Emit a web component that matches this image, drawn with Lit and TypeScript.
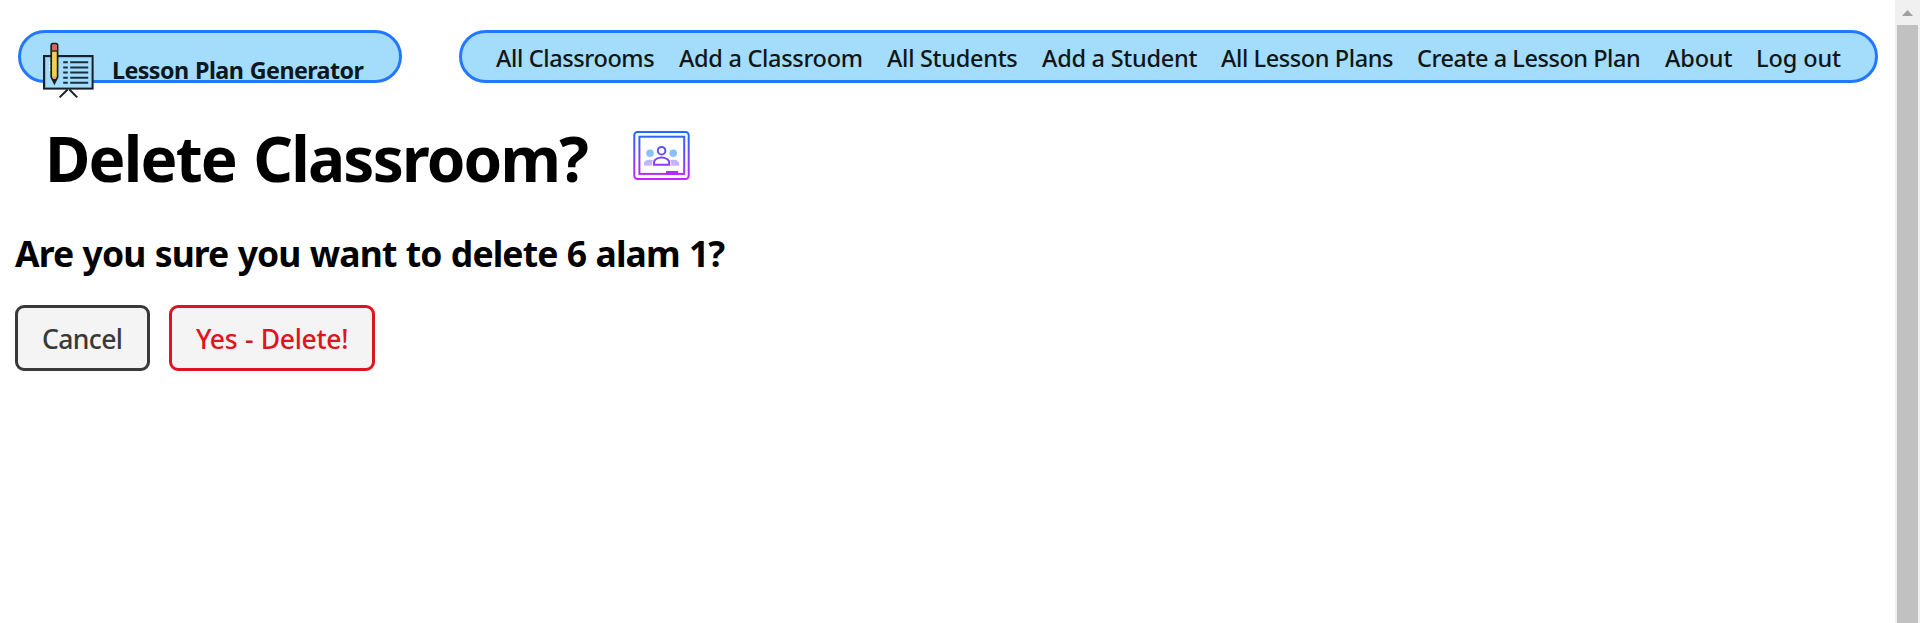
import { LitElement, html, css } from "lit";

class AppRoot extends LitElement {
  static styles = css`
    :host {
      display: flex;
      height: 623px;
      overflow: hidden;
      background: #fff;
      color: #000;
      font-family: "Noto Sans", "Open Sans", sans-serif;
      white-space: nowrap;
    }
    .page { flex: 1; min-width: 0; }
    header {
      display: flex;
      gap: 57px;
      padding: 30px 17px 0 18px;
    }
    .pill {
      box-sizing: border-box;
      height: 53px;
      border: 3px solid #2477ff;
      border-radius: 27px;
      background: #a4dcfb;
    }
    .logo {
      display: flex;
      align-items: flex-start;
      gap: 17px;
      width: 384px;
      padding-left: 22px;
      color: #0b1820;
      font-size: 23.3px;
      font-weight: 700;
      line-height: 74px;
      letter-spacing: -0.6px;
      word-spacing: 1.2px;
    }
    .logo svg { flex: none; margin-top: 9px; }
    nav {
      flex: 1;
      display: grid;
      grid-template-columns: 183px 208px 155px 179px 196px 248px 91px auto;
      padding-left: 34px;
      color: #101616;
      font-size: 23.5px;
      font-weight: 500;
      line-height: 50px;
      letter-spacing: -0.38px;
    }
    nav a:nth-child(2), nav a:nth-child(3) { letter-spacing: -0.3px; }
    nav a:nth-child(4) { letter-spacing: -0.26px; }
    nav a:nth-child(5) { letter-spacing: -0.41px; }
    nav a:nth-child(6) { letter-spacing: -0.46px; }
    nav a:nth-child(7) { letter-spacing: -0.15px; }
    nav a:nth-child(8) { letter-spacing: -0.1px; }
    .title {
      display: flex;
      align-items: flex-start;
      margin-top: 35px;
      padding-left: 45px;
    }
    h1 {
      width: 587px;
      margin: 0;
      font-size: 62px;
      line-height: 80px;
      letter-spacing: -1.8px;
      word-spacing: 3px;
    }
    .title svg { flex: none; margin-top: 12px; }
    h2 {
      margin: 31px 0 28px 15px;
      font-size: 35.5px;
      line-height: 48px;
      letter-spacing: -0.9px;
      word-spacing: 1px;
    }
    .actions { display: flex; gap: 19px; padding-left: 15px; }
    button {
      box-sizing: border-box;
      width: 135px;
      height: 66px;
      padding: 0 0 0 24px;
      border: 3px solid #393939;
      border-radius: 9px;
      background: #f4f4f4;
      color: #393939;
      font: 500 26.5px/63px "Noto Sans", sans-serif;
      letter-spacing: -0.6px;
      text-align: left;
      display: flex;
    }
    button.danger {
      width: 206px;
      border-color: #de1420;
      color: #de1420;
      letter-spacing: -0.3px;
      word-spacing: 1px;
    }
    .scroll {
      display: flex;
      flex-direction: column;
      align-items: center;
      width: 25px;
      background: #f0f0f0;
    }
    .scroll svg { display: block; flex: none; }
    .thumb { flex: 1; width: 21px; background: #c1c1c1; }
  `;

  links = ["All Classrooms", "Add a Classroom", "All Students", "Add a Student",
    "All Lesson Plans", "Create a Lesson Plan", "About", "Log out"];

  board() {
    return html`<svg width="52" height="58" viewBox="43 42 52 58" fill="none">
      <path d="M67.6 89.5 59.6 97.4M69.4 89.5 77.2 97.4" stroke="#1c2226" stroke-width="2"/>
      <rect x="44" y="56" width="48.6" height="32.6" fill="#a4dcfb" stroke="#14202a" stroke-width="2"/>
      <path d="M45.6 87V57.6H91" stroke="#78b8d8" stroke-width="1"/>
      <path d="M63.2 62.3h4.6m2.4 0h18M63.2 67.4h4.6m2.4 0h18M63.2 72.6h4.6m2.4 0h18M63.2 77.7h4.6m2.4 0h18M63.2 82.8h4.6m2.4 0h18" stroke="#17303f" stroke-width="2"/>
      <path d="M50 62v1.6m0 1.4v2.4m0 1.6v2" stroke="#fff4c0" stroke-width="1.6"/>
      <path d="M51.2 45.2a1.6 1.6 0 0 1 1.6-1.6h3.2a1.6 1.6 0 0 1 1.6 1.6V77l-3.2 6.4L51.2 77Z" fill="#f4cf58" stroke="#201c1a" stroke-width="1.7"/>
      <path d="M52 45h4.8v5.4H52Z" fill="#dc6068"/>
      <path d="M51 51h6.8" stroke="#30282a" stroke-width="1.5"/>
      <path d="M52 76.4h4.8l-2.4 3Z" fill="#d9a078"/>
      <path d="M52.6 79h3.6l-1.8 4Z" fill="#201c1a"/>
    </svg>`;
  }

  classroom() {
    return html`<svg width="60" height="52" viewBox="632 130 60 52" fill="none">
      <defs>
        <linearGradient id="a" gradientUnits="userSpaceOnUse" x1="0" y1="131" x2="0" y2="180">
          <stop stop-color="#1a6dff"/><stop offset="1" stop-color="#c822ff"/>
        </linearGradient>
        <linearGradient id="b" gradientUnits="userSpaceOnUse" x1="0" y1="149" x2="0" y2="168">
          <stop stop-color="#6dc7ff"/><stop offset="1" stop-color="#e6abff"/>
        </linearGradient>
      </defs>
      <g fill="url(#b)">
        <circle cx="650" cy="153.3" r="3.8"/><circle cx="673.2" cy="153.3" r="3.8"/>
        <path d="M644 165.8v-2.6c0-2 3-3.4 6-3.4 1.2 0 2.4.2 3.4.6-1 .8-1.4 1.6-1.4 2.6v2.8ZM679.2 165.8v-2.6c0-2-3-3.4-6-3.4-1.2 0-2.4.2-3.4.6 1 .8 1.4 1.6 1.4 2.6v2.8Z"/>
      </g>
      <g stroke="url(#a)" stroke-width="2">
        <rect x="634.3" y="132" width="54.4" height="47" rx="3.2"/>
        <rect x="639.4" y="136.7" width="44.8" height="37.2"/>
        <circle cx="661.6" cy="150.7" r="3.8"/>
        <path d="M654 164.8v-2.6c0-2.4 3.4-4.6 7.6-4.6s7.6 2.2 7.6 4.6v2.6Z"/>
      </g>
      <path d="M666 171h12.2v3.6H666Z" fill="url(#a)"/>
    </svg>`;
  }

  render() {
    return html`
      <div class="page">
        <header>
          <div class="pill logo">${this.board()}<span>Lesson Plan Generator</span></div>
          <nav class="pill">${this.links.map((l) => html`<a>${l}</a>`)}</nav>
        </header>
        <div class="title"><h1>Delete Classroom?</h1>${this.classroom()}</div>
        <h2>Are you sure you want to delete 6 alam 1?</h2>
        <div class="actions">
          <button>Cancel</button>
          <button class="danger">Yes - Delete!</button>
        </div>
      </div>
      <div class="scroll">
        <svg width="25" height="25" viewBox="0 0 25 25"><path d="M7 16 12.5 10 18 16Z" fill="#a0a0a0"/></svg>
        <div class="thumb"></div>
      </div>`;
  }
}
customElements.define("app-root", AppRoot);
